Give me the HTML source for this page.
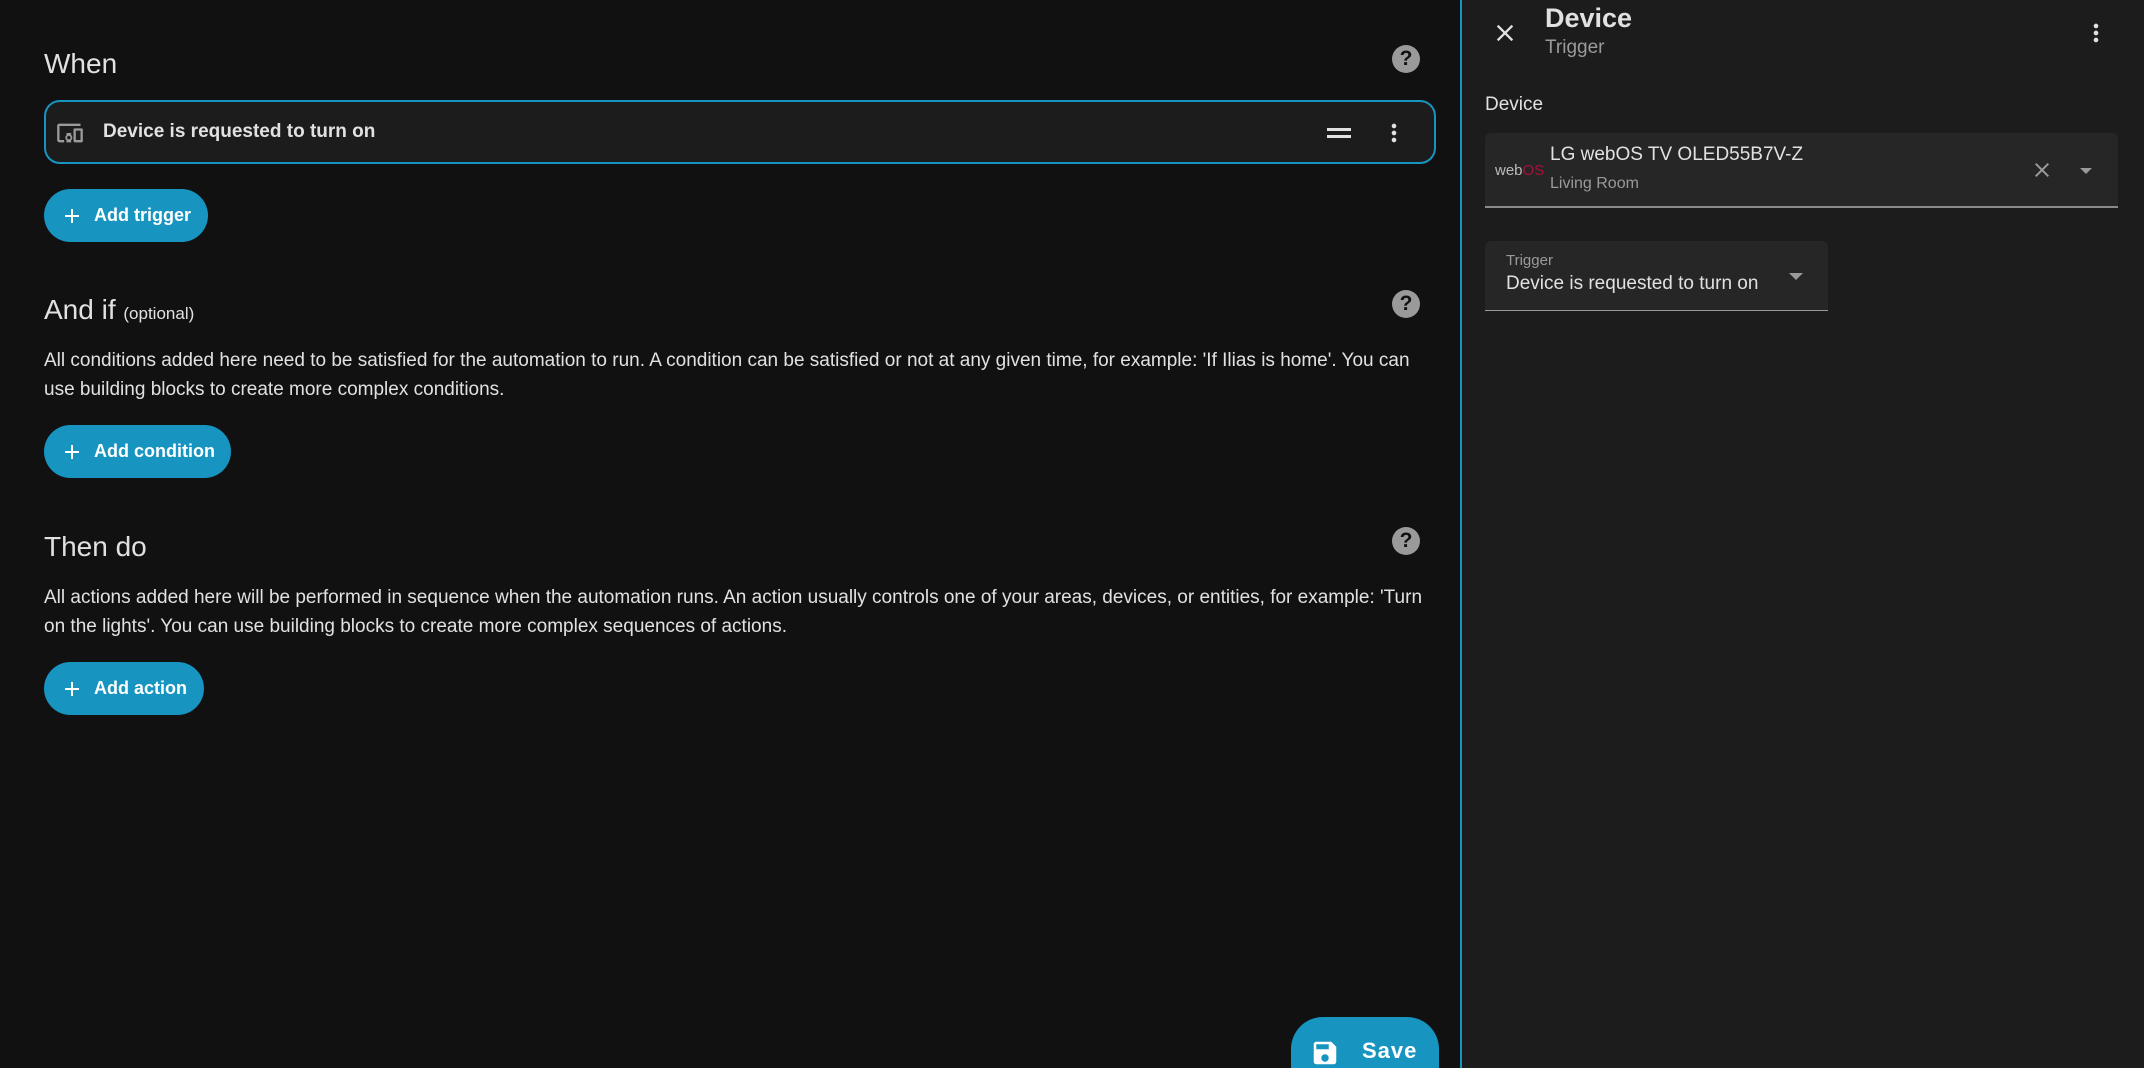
<!DOCTYPE html>
<html><head><meta charset="utf-8"><style>
*{box-sizing:border-box;margin:0;padding:0}
html{width:2144px;height:1068px;overflow:hidden}
body{width:2144px;height:1068px;background:#111111;font-family:"Liberation Sans",Roboto,sans-serif;color:#e1e1e1;position:relative;overflow:hidden}
.abs{position:absolute}
h2{position:absolute;left:44px;font-size:28px;font-weight:400;color:#e1e1e1;line-height:32px}
.help{position:absolute;left:1392px;width:28px;height:28px;border-radius:50%;background:#9a9a9a;color:#111;font-weight:700;font-size:21px;text-align:center;line-height:28px}
.btn{position:absolute;left:44px;height:53px;border-radius:27px;background:#1794c0;color:#fff;font-weight:700;font-size:18px;display:flex;align-items:center;padding-left:16px}
.btn svg{margin-right:10px}
.desc{position:absolute;left:44px;width:1440px;font-size:19px;line-height:29px;color:#e1e1e1;white-space:nowrap}
</style></head><body>
<h2 style="top:48px">When</h2>
<div class="help" style="top:45px">?</div>
<div class="abs" style="left:44px;top:100px;width:1392px;height:64px;border:2px solid #1794c0;border-radius:16px;background:#1c1c1c"></div>
<svg class="abs" style="left:54px;top:119px" width="32" height="28" viewBox="0 0 24 24"><path fill="#9a9a9a" d="M3 6h18V4H3c-1.1 0-2 .9-2 2v12c0 1.1.9 2 2 2h4v-2H3V6zm10 6H9v1.78c-.61.55-1 1.330-1 2.220s.39 1.67 1 2.22V20h4v-1.78c.61-.55 1-1.34 1-2.22s-.39-1.67-1-2.22V12zm-2 5.5c-.83 0-1.5-.67-1.5-1.5s.67-1.5 1.5-1.5 1.5.67 1.5 1.5-.67 1.5-1.5 1.5zM22 8h-6c-.5 0-1 .5-1 1v10c0 .5.5 1 1 1h6c.5 0 1-.5 1-1V9c0-.5-.5-1-1-1zm-1 10h-4v-8h4v8z"/></svg>
<div class="abs" style="left:103px;top:121px;font-size:19px;font-weight:700;color:#e1e1e1">Device is requested to turn on</div>
<div class="abs" style="left:1327px;top:128px;width:24px;height:2.5px;background:#e1e1e1"></div>
<div class="abs" style="left:1327px;top:135px;width:24px;height:2.5px;background:#e1e1e1"></div>
<svg class="abs" style="left:1380px;top:117px" width="28" height="32" viewBox="0 0 24 24"><path fill="#e1e1e1" d="M12 16a2 2 0 110 4 2 2 0 010-4zm0-6a2 2 0 110 4 2 2 0 010-4zm0-6a2 2 0 110 4 2 2 0 010-4z"/></svg>
<div class="btn" style="top:189px;width:164px"><svg width="24" height="24" viewBox="0 0 24 24"><path fill="#fff" d="M19 13h-6v6h-2v-6H5v-2h6V5h2v6h6v2z"/></svg>Add trigger</div>

<h2 style="top:294px">And if <span style="font-size:17px">(optional)</span></h2>
<div class="help" style="top:290px">?</div>
<div class="desc" style="top:346px">All conditions added here need to be satisfied for the automation to run. A condition can be satisfied or not at any given time, for example: 'If Ilias is home'. You can<br>use building blocks to create more complex conditions.</div>
<div class="btn" style="top:425px;width:187px"><svg width="24" height="24" viewBox="0 0 24 24"><path fill="#fff" d="M19 13h-6v6h-2v-6H5v-2h6V5h2v6h6v2z"/></svg>Add condition</div>

<h2 style="top:531px">Then do</h2>
<div class="help" style="top:527px">?</div>
<div class="desc" style="top:583px">All actions added here will be performed in sequence when the automation runs. An action usually controls one of your areas, devices, or entities, for example: 'Turn<br>on the lights'. You can use building blocks to create more complex sequences of actions.</div>
<div class="btn" style="top:662px;width:160px"><svg width="24" height="24" viewBox="0 0 24 24"><path fill="#fff" d="M19 13h-6v6h-2v-6H5v-2h6V5h2v6h6v2z"/></svg>Add action</div>

<div class="abs" style="left:1291px;top:1017px;width:148px;height:51px;border-radius:32px 32px 0 0;background:#1794c0;color:#fff;font-weight:700;font-size:22px;letter-spacing:1px;padding:21px 0 0 19px;display:flex"><svg width="30" height="30" viewBox="0 0 24 24" style="margin-right:22px"><path fill="#fff" d="M15 9H5V5h10m-3 14a3 3 0 110-6 3 3 0 010 6m5-16H5a2 2 0 00-2 2v14a2 2 0 002 2h14a2 2 0 002-2V7l-4-4z"/></svg>Save</div>

<div class="abs" style="left:1460px;top:-20px;width:684px;height:1088px;background:#1c1c1c;border:2px solid #1794c0;border-bottom:none;border-right:none;border-radius:20px 0 0 0"></div>
<svg class="abs" style="left:1491px;top:19px" width="28" height="28" viewBox="0 0 24 24"><path fill="#e1e1e1" d="M19 6.41L17.59 5 12 10.59 6.41 5 5 6.41 10.59 12 5 17.59 6.41 19 12 13.41 17.59 19 19 17.59 13.41 12z"/></svg>
<div class="abs" style="left:1545px;top:3px;font-size:27px;font-weight:700;color:#e1e1e1">Device</div>
<div class="abs" style="left:1545px;top:37px;font-size:19px;color:#9a9a9a">Trigger</div>
<svg class="abs" style="left:2082px;top:17px" width="28" height="32" viewBox="0 0 24 24"><path fill="#e1e1e1" d="M12 16a2 2 0 110 4 2 2 0 010-4zm0-6a2 2 0 110 4 2 2 0 010-4zm0-6a2 2 0 110 4 2 2 0 010-4z"/></svg>
<div class="abs" style="left:1485px;top:94px;font-size:19px;color:#e1e1e1">Device</div>
<div class="abs" style="left:1485px;top:133px;width:633px;height:75px;background:#262626;border-radius:6px 6px 0 0;border-bottom:2px solid #8a8a8a"></div>
<div class="abs" style="left:1495px;top:162px;font-size:15px;color:#bbb">web<span style="color:#a5123c">OS</span></div>
<div class="abs" style="left:1550px;top:144px;font-size:19px;color:#e1e1e1">LG webOS TV OLED55B7V-Z</div>
<div class="abs" style="left:1550px;top:175px;font-size:16px;color:#9a9a9a">Living Room</div>
<svg class="abs" style="left:2030px;top:158px" width="24" height="24" viewBox="0 0 24 24"><path fill="#9a9a9a" d="M19 6.41L17.59 5 12 10.59 6.41 5 5 6.41 10.59 12 5 17.59 6.41 19 12 13.41 17.59 19 19 17.59 13.41 12z"/></svg>
<div class="abs" style="left:2080px;top:168px;border-left:6px solid transparent;border-right:6px solid transparent;border-top:6px solid #9a9a9a"></div>
<div class="abs" style="left:1485px;top:241px;width:343px;height:70px;background:#262626;border-radius:6px 6px 0 0;border-bottom:1px solid #9a9a9a"></div>
<div class="abs" style="left:1506px;top:252px;font-size:15px;color:#9a9a9a">Trigger</div>
<div class="abs" style="left:1506px;top:273px;font-size:19px;color:#e1e1e1">Device is requested to turn on</div>
<div class="abs" style="left:1789px;top:273px;border-left:7px solid transparent;border-right:7px solid transparent;border-top:7px solid #9a9a9a"></div>
</body></html>
